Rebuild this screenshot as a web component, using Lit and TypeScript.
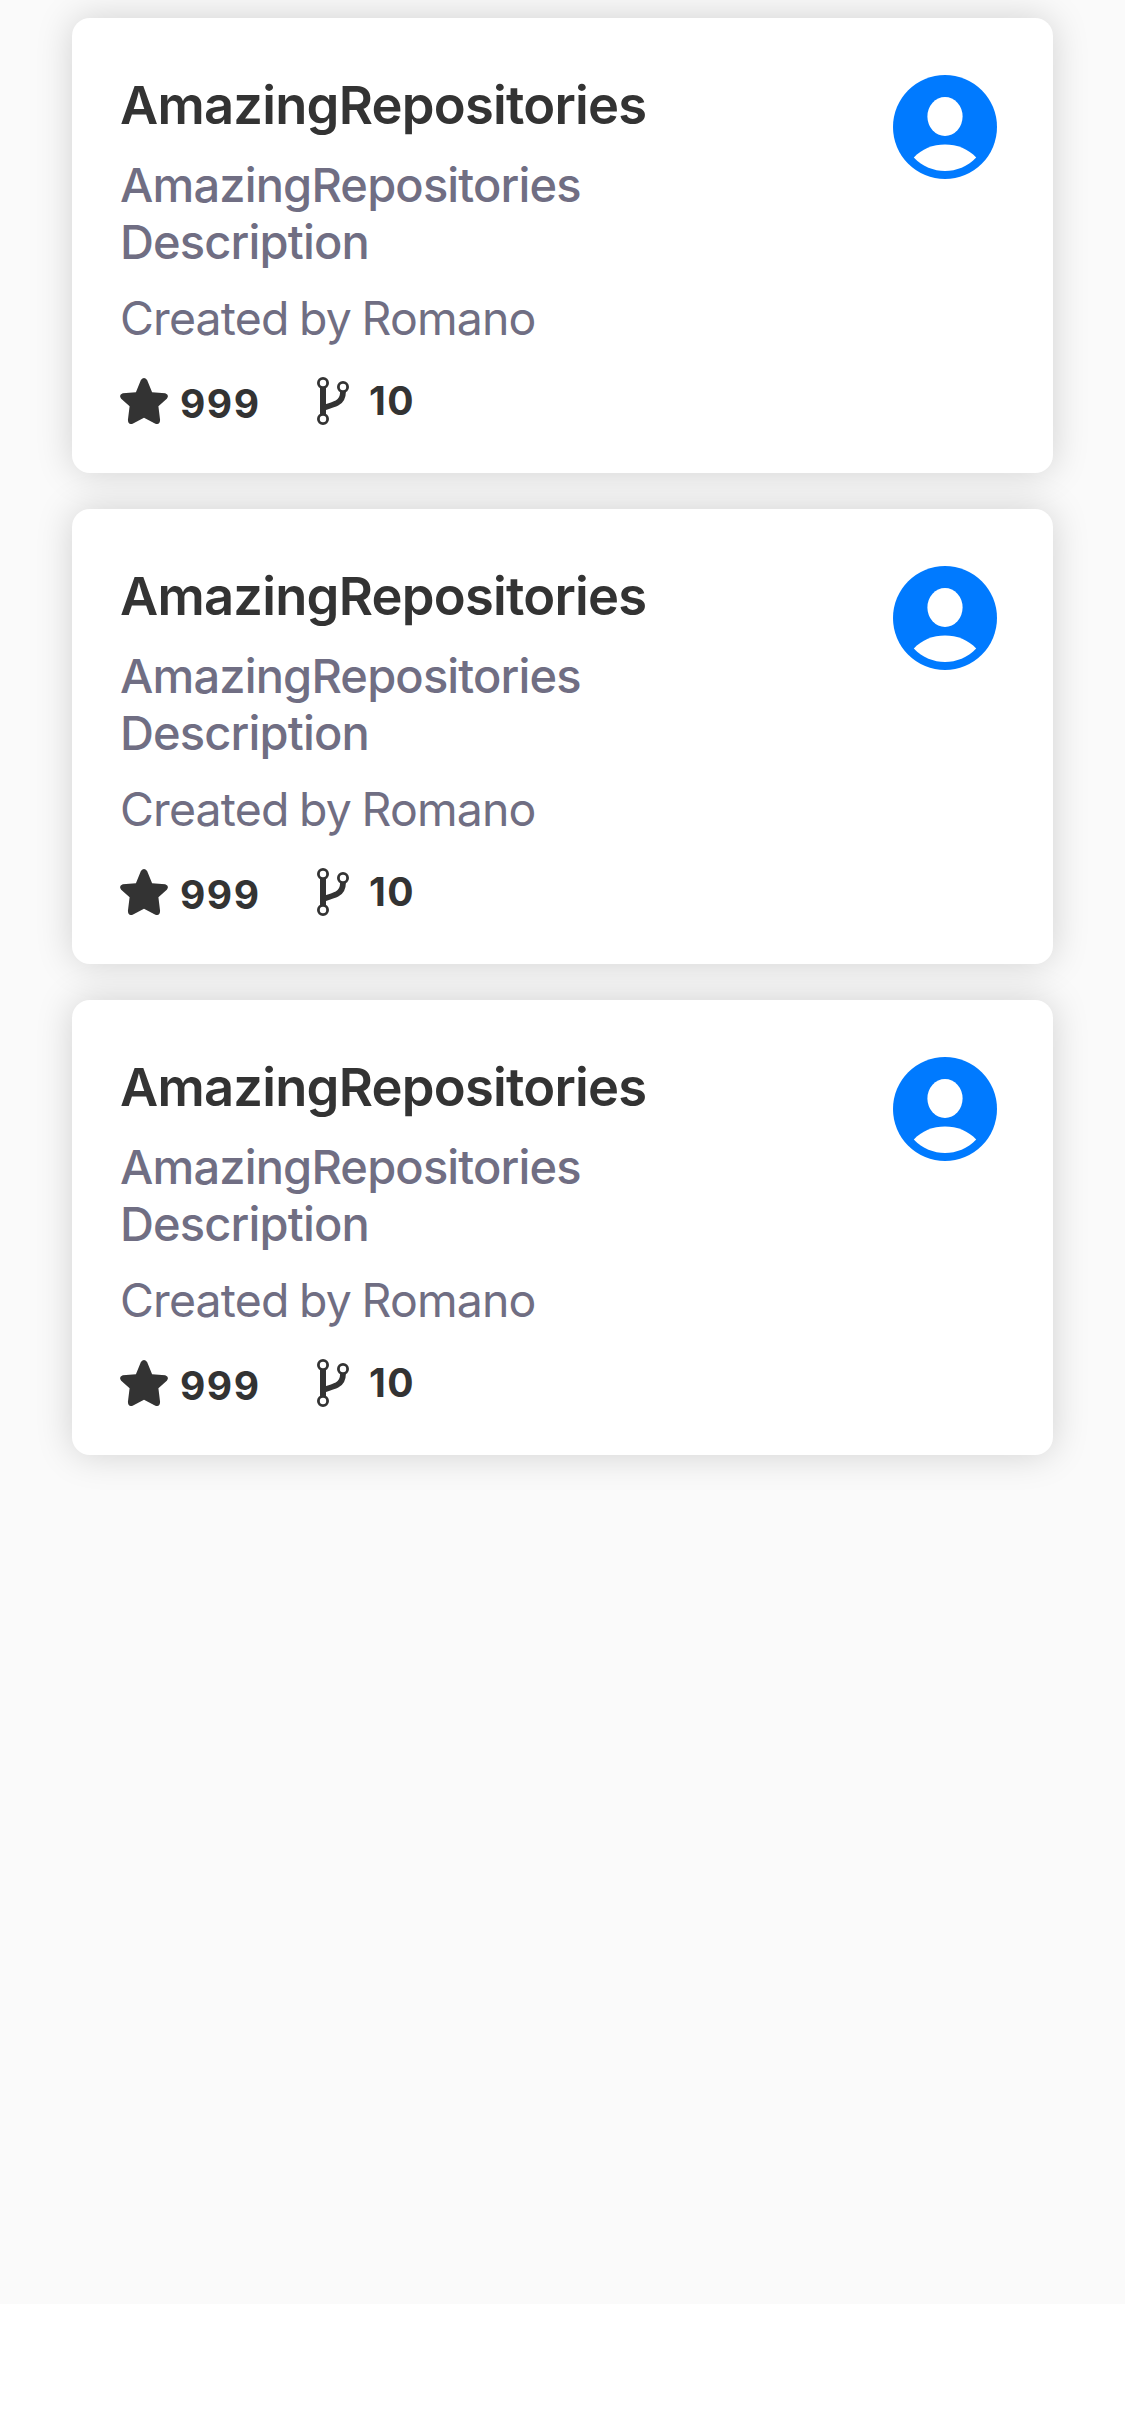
import { LitElement, html, css } from "lit";
import { customElement, property } from "lit/decorators.js";

interface Repo {
  name: string;
  description: string;
  owner: string;
  stars: number;
  forks: number;
}

const repo: Repo = {
  name: "AmazingRepositories",
  description: "AmazingRepositories Description",
  owner: "Romano",
  stars: 999,
  forks: 10,
};

const repos: Repo[] = [repo, repo, repo];

@customElement("repo-card")
export class RepoCard extends LitElement {
  @property({ attribute: false }) repo!: Repo;

  static styles = css`
    :host {
      display: block;
    }
    .card {
      box-sizing: border-box;
      display: flex;
      justify-content: space-between;
      height: 455px;
      padding: 55px 56px 0 48px;
      border-radius: 18px;
      background: #fff;
      box-shadow: 0 0 36px rgba(0, 0, 0, 0.17);
    }
    .info {
      width: 560px;
      color: #706e83;
      font-size: 47px;
      line-height: 57px;
    }
    .name {
      color: #333;
      font-size: 52.5px;
      line-height: 64px;
      font-weight: 600;
      letter-spacing: -0.77px;
    }
    .description {
      margin-top: 19px;
      font-weight: 500;
      letter-spacing: -0.84px;
    }
    .owner {
      margin-top: 20px;
      font-size: 46.4px;
      letter-spacing: -0.82px;
      word-spacing: -1.7px;
    }
    .stats {
      display: flex;
      align-items: flex-start;
      margin-top: 30px;
      color: #333;
      font-size: 39px;
      line-height: 48px;
      font-weight: 700;
      letter-spacing: 1.5px;
    }
    .star {
      width: 48px;
      height: 48px;
    }
    .fork {
      width: 32px;
      height: 48px;
      margin-left: 56.5px;
    }
    .stars {
      margin: 3px 0 0 12px;
    }
    .forks {
      margin-left: 20px;
    }
    .avatar {
      width: 104px;
      height: 104px;
      margin-top: 2px;
    }
  `;

  render() {
    return html`<article class="card">
      <div class="info">
        <div class="name">${this.repo.name}</div>
        <div class="description">${this.repo.description}</div>
        <div class="owner">Created by ${this.repo.owner}</div>
        <div class="stats">
          <svg class="star" viewBox="0 0 48 48" fill="#333">
            <path d="M20.9 3.1Q24 -1.1 27.1 3.1L32.1 15.2L45.2 16.2Q49.7 17.9 46.8 21.7L38.4 29.3L40.1 43Q39.8 48.3 35.4 46.7L24 40.8L12.6 46.7Q8.2 48.3 7.9 43L9.6 29.3L1.2 21.7Q-1.7 17.9 2.8 16.2L15.9 15.2Z" />
          </svg>
          <span class="stars">${this.repo.stars}</span>
          <svg class="fork" viewBox="0 0 32 48" fill="none" stroke="#333">
            <circle cx="6" cy="6" r="4.6" stroke-width="2.8" />
            <circle cx="26" cy="10" r="4.6" stroke-width="2.8" />
            <circle cx="6" cy="42" r="4.6" stroke-width="2.8" />
            <path d="M6 10.5V37.5" stroke-width="6" />
            <path d="M26 14.8Q26 23 20 26Q17 27.500 6 31" stroke-width="5.8" />
          </svg>
          <span class="forks">${this.repo.forks}</span>
        </div>
      </div>
      <svg class="avatar" viewBox="0 0 104 104">
        <circle cx="52" cy="52" r="52" fill="#007aff" />
        <ellipse cx="52" cy="41.500" rx="17.600" ry="19.500" fill="#fff" />
        <path d="M20.800 82.500C36 65 68 65 83.200 82.500C66 100.500 38 100.500 20.800 82.500Z" fill="#fff" />
      </svg>
    </article>`;
  }
}

@customElement("app-root")
export class AppRoot extends LitElement {
  static styles = css`
    :host {
      display: block;
      height: 2436px;
      background: #fff;
      font-family: Inter, "Liberation Sans", sans-serif;
    }
    .list {
      box-sizing: border-box;
      display: flex;
      flex-direction: column;
      gap: 36px;
      height: 2304px;
      padding: 18px 72px;
      overflow: hidden;
      background: #fafafa;
    }
  `;

  render() {
    return html`<main class="list">
      ${repos.map((r) => html`<repo-card .repo=${r}></repo-card>`)}
    </main>`;
  }
}
